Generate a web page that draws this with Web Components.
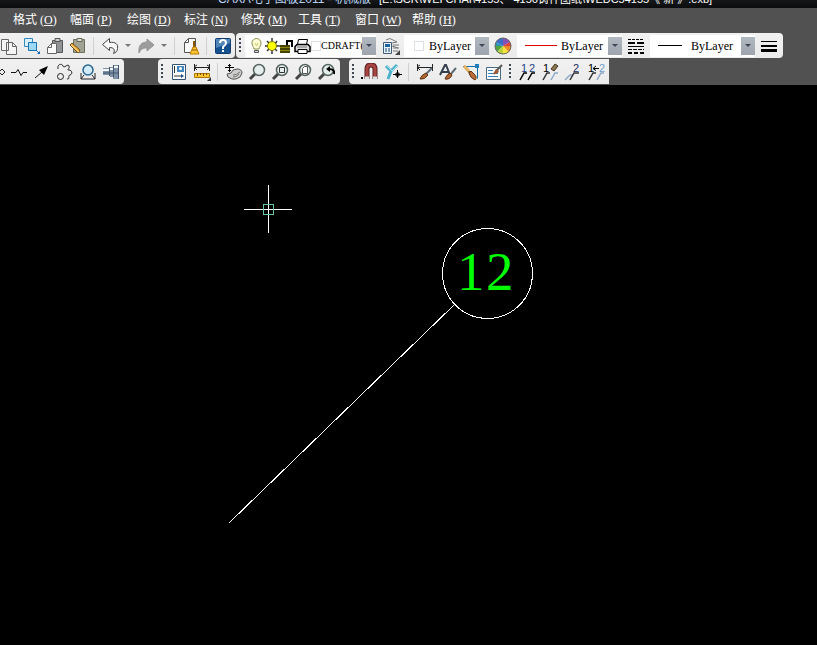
<!DOCTYPE html>
<html lang="zh-CN">
<head>
<meta charset="utf-8">
<title>CAXA电子图板2011</title>
<style>
html,body{height:100%}
body{margin:0;background:#000;overflow:hidden;font:12px/16px "Liberation Serif","Noto Sans CJK SC",serif}
</style>
</head>
<body>
<cad-app></cad-app>
<script>
const ICONS = {
copy:'<path d="M1.500 2.500h7v11h-7zM6.500 5.500h6l4 4v8h-10z" fill="#f5f5f5" stroke="#666"/><path d="M12.500 5.500v4h4" fill="none" stroke="#666"/>',
link:'<path d="M1.500 1.500h8v8h-8z" fill="#d9effb" stroke="#3388b8"/><path d="M5.500 5.500h8v8h-8z" fill="#9bd8fa" stroke="#1673b4"/><path d="M13 13l3 3" stroke="#1469b0"/><path d="M14 17h3v-3z" fill="#1469b0"/>',
paste:'<path d="M6.500 3.500h10v12h-10z" fill="#909497" stroke="#555"/><path d="M9 1.500h5v3H9z" fill="#ccc" stroke="#555"/><path d="M1.500 10.500l4-4h5v10h-9z" fill="#fafafa" stroke="#666"/><path d="M1.500 10.500h4v-4" fill="none" stroke="#666"/>',
format:'<path d="M4.500 2.500h11v13h-11z" fill="#a0a292" stroke="#69705e"/><path d="M8 1.500h5v3H8z" fill="#e2dfc3" stroke="#666"/><path d="M1 8l8 8 2-3-8-7z" fill="#edaa35" stroke="#775018"/><path d="M2 8l8 7" stroke="#ffe09a"/>',
undo:'<path d="M1.500 7.500l7-6v4c6-1 9 2 8 6 0 3-2 4-4 5 2-4 0-6-4-6v3z" fill="#f8f8f8" stroke="#444" stroke-linejoin="round"/>',
redo:'<path d="M17 8l-7-6v3C5 5 1 8 2 16c2-4 4-5 8-5v3z" fill="#9c9c9c" stroke="#989898"/>',
clean:'<path d="M2.500 5.500l4-4h7v14h-11z" fill="#fafafa" stroke="#555"/><path d="M2.500 5.500h4v-4" fill="none" stroke="#555"/><path d="M12 4v6" stroke="#8b5706" stroke-width="2"/><path d="M11 10h3l3 7H8z" fill="#ffc632" stroke="#ba7600"/><path d="M10 13h5" stroke="#8b5706"/>',
help:'<rect x="1.500" y="1.500" width="15" height="15" rx="1" fill="#15508f" stroke="#123c6d"/><path d="M2 2h14v4L2 11z" fill="#4e87b8"/><path d="M6 6q0-3 3-3t3 3q0 2-3 4v2M9 13v2" fill="none" stroke="#fff" stroke-width="2"/>',
bulb:'<path d="M4 12c0-2-2-3-2-6a4.500 4.500 0 019 0c0 3-2 4-2 6z" fill="#ffffd8" stroke="#8b8b46"/><path d="M4.500 13.500h4v2h-4z" fill="#ddd" stroke="#555"/><path d="M5 6l1.500 3L8 6" fill="none" stroke="#cdc86b"/>',
sun:'<path d="M8 1v3M8 14v3M1 9h3M12 9h4M3 4l3 3M11 12l2 2M13 4l-2 3M5 12l-2 2" stroke="#333" stroke-width="1.500"/><circle cx="8" cy="9" r="4.500" fill="#ff0" stroke="#777800"/>',
lock:'<path d="M0 8h10v8H0z" fill="#8b860f"/><path d="M0 9h10M0 12h10M0 15h10" stroke="#000" stroke-width="1"/><path d="M7 8V4h5v6" fill="none" stroke="#000" stroke-width="2"/>',
printer:'<path d="M4.500 2.500h9l-1 5h-9z" fill="#fff" stroke="#000"/><path d="M3 7.500h11l2 2v5H1v-5z" fill="#ddd" stroke="#000" stroke-width="1.500"/><path d="M4 12.500h9v4H4z" fill="#fff" stroke="#000"/><path d="M3 10h10" stroke="#777"/>',
layers:'<path d="M1.500 5.500h8v11h-8z" fill="#eaf4fc" stroke="#425b75"/><path d="M3 7h5v3H3z" fill="#1e63a4"/><path d="M3 12h2M6 12h2M3 14h2M6 14h2" stroke="#174777"/><path d="M4 3q4-3 7 0l4 2-5 1M11 8h6M11 11h6M11 14h5M10 9l6 2" fill="none" stroke="#777"/><path d="M18 13v5h-5z" fill="#444"/>',
wheel:'<path d="M9 9V1A8 8 0 0116 5z" fill="#8252b7"/><path d="M9 9L2 5a8 8 0 017-4z" fill="#386fc9"/><path d="M9 9H1a8 8 0 011-4z" fill="#2b95b7"/><path d="M9 9L3 15a8 8 0 01-2-6z" fill="#52a53e"/><path d="M9 9v8a8 8 0 01-6-2z" fill="#bad13b"/><path d="M9 9l6 6a8 8 0 01-6 2z" fill="#f8e43d"/><path d="M9 9h8a8 8 0 01-2 6z" fill="#ef8b27"/><path d="M9 9l7-4a8 8 0 011 4z" fill="#e33e36"/><circle cx="9" cy="9" r="8" fill="none" stroke="#666"/>',
types:'<path d="M1 2.500h16" stroke="#000" stroke-dasharray="3 1"/><path d="M1 6h16" stroke="#000" stroke-width="2" stroke-dasharray="7 2"/><path d="M1 9.500h16" stroke="#000" stroke-width="1"/><path d="M1 12.500h16" stroke="#000" stroke-dasharray="4 1"/><path d="M1 16h16" stroke="#000" stroke-width="2" stroke-dasharray="4 2"/>',
weights:'<path d="M1 4.500h16" stroke="#000"/><path d="M1 9h16" stroke="#000" stroke-width="2"/><path d="M1 13.500h16" stroke="#000" stroke-width="3"/>',
diamond:'<path d="M15 6l3 3-3 3-3-3z" fill="none" stroke="#222"/>',
zig:'<path d="M1 9.500h5l2-3 3 6 2-3h4" fill="none" stroke="#111"/>',
arrow:'<path d="M2 15L9 9" stroke="#111"/><path d="M15 3L6 7l5 5z" fill="#000"/>',
spline:'<circle cx="4.500" cy="13.500" r="3" fill="none" stroke="#222"/><path d="M2 6c-1-5 4-6 5-3s5-3 6 0-3 4 0 4 4 4 1 5 1 4-3 4" fill="none" stroke="#222"/>',
hole:'<circle cx="9" cy="7" r="5" fill="#d2eaf9" stroke="#29668e" stroke-width="1.500"/><path d="M2 10v6h14v-6M2 16l3-4M16 16l-3-4" fill="none" stroke="#222"/>',
shaft:'<path d="M1 5h7V4h3V2h6v14h-6v-2H8v-2H1z" fill="#7e91a7"/><path d="M1 7h6M8 6h3M12 4h4" fill="none" stroke="#f2f7fc" stroke-width="2"/><path d="M7.500 4v9M11.500 2v12M1 10h15M16.500 2v14" stroke="#41546d"/>',
block:'<path d="M2.500 1.500h13v15h-13z" fill="#fff" stroke="#345578"/><path d="M7 3h7v6H7z" fill="#4385be"/><path d="M4.500 3v7M4 13h8" stroke="#333"/><circle cx="10.500" cy="5.500" r="1.500" fill="#fff"/><path d="M11 11l3 2-3 2z" fill="#14508a"/>',
measure:'<path d="M1.500 1v7M16.500 1v7M1 4.500h16M4 2L1 4l3 3M14 2l3 2-3 3" stroke="#222" fill="none"/><path d="M1.500 10.500h15v4h-15z" fill="#ffc62b" stroke="#aa7605"/><path d="M4.500 10v3M7.500 10v2M10.500 10v3M13.500 10v2" stroke="#775000"/><path d="M18 14v4h-4z" fill="#333"/>',
hand:'<path d="M6 10q1-4 6-4 5 0 5 4-1 5-6 6-4 1-8-2l-1-3z" fill="#cdcdcb" stroke="#555" stroke-linejoin="round"/><path d="M8 12q4 0 7-3M8 14q4 0 6-3" stroke="#777" fill="none"/><path d="M4.500 1v8M0 4.500h9M3 2.500h3M3 7.500h3" stroke="#000"/>',
zoom:'<path d="M7 11l-5 5" stroke="#444" stroke-width="3"/><circle cx="11" cy="7" r="5.500" fill="#e3eeed" stroke="#566461" stroke-width="1.500"/>',
magnet:'<path d="M6 16V6q0-4 4-4t4 4v10" fill="none" stroke="#5c2020" stroke-width="5"/><path d="M6 16V6q0-4 4-4t4 4v10" fill="none" stroke="#a84441" stroke-width="3"/><path d="M4 15h4M12 15h4" stroke="#d9e2e7" stroke-width="3"/><path d="M0 14h2v2H0z" fill="#000"/>',
snap:'<path d="M2 3l5 5 6-6M7 8l-3 8" fill="none" stroke="#4fb2cd" stroke-width="3"/><path d="M3 3l5 5 5-5" fill="none" stroke="#a4e4ef"/><path d="M13.500 7v8M9 11.500h9" stroke="#000"/><path d="M12 10h3v3h-3z" fill="none" stroke="#000"/>',
dim:'<path d="M1.500 1v7M16.500 1v7M1 4.500h16M4 2L1 4l3 3" fill="none" stroke="#222"/><path d="M16 5l-7 7" stroke="#5e6c76" stroke-width="2"/><path d="M10 10l2 2q-3 5-8 4 1-4 6-6z" fill="#ae6534" stroke="#613312"/>',
textstyle:'<path d="M1 12L6 2h1l4 10M3 9h7" fill="none" stroke="#333f4c" stroke-width="2"/><path d="M17 5l-6 7" stroke="#5e6c76" stroke-width="2"/><path d="M11 10l2 2q-2 5-7 4 1-4 5-6z" fill="#ae6534" stroke="#613312"/>',
leader:'<path d="M1 3.500h14.500v12" fill="none" stroke="#126caa"/><path d="M13 1h4v4h-4z" fill="#237dbd"/><path d="M2 3l7 8" stroke="#74522a" stroke-width="2"/><path d="M9 8l2 2q5 4 2 7-5-2-6-7z" fill="#bb6d35" stroke="#613312"/><path d="M2 3l5 5" stroke="#eab35c" stroke-width="3"/>',
table:'<path d="M1.500 4.500h14v12h-14z" fill="#f7fcff" stroke="#4b6c88"/><path d="M3 7.500h5M3 10.500h10M3 13.500h10" stroke="#3a82b6"/><path d="M17 2l-6 6" stroke="#555" stroke-width="2"/><path d="M11 6l3 2q-2 4-6 3z" fill="#9e5c38"/>'
};
ICONS.zoomWin = ICONS.zoom + '<path d="M8.500 4.500h5v5h-5z" fill="none" stroke="#333"/>';
ICONS.zoomPage = ICONS.zoom + '<path d="M8.500 5.500l2-2h3v7h-5z" fill="#fff" stroke="#555"/>';
ICONS.zoomPrev = ICONS.zoom + '<path d="M17 11q1-5-5-5" fill="none" stroke="#000" stroke-width="2"/><path d="M9 6l4-3v6z" fill="#000"/>';
const legs = (a, b) => `<path d="M2 17l4-7h3" fill="none" stroke="${a}" stroke-width="1.500"/><path d="M10 17l4-7h3" fill="none" stroke="${b}" stroke-width="1.500"/>`;
const digit = (x, t, c) => `<text x="${x}" y="9" font-family="Liberation Sans,sans-serif" font-size="11" fill="${c}">${t}</text>`;
ICONS.num12 = legs('#000', '#000') + digit(3, '1', '#1d3f87') + digit(11, '2', '#1d3f87');
ICONS.numDel = legs('#333', '#8fa9ca') + digit(2, '1', '#000') + '<path d="M10 6l4-5 3 2-4 5z" fill="#8c7452" stroke="#443523"/>';
ICONS.num2 = '<path d="M1 17l5-5h3" fill="none" stroke="#8fa9ca" stroke-width="1.500"/><path d="M6 17l4-7h5" fill="none" stroke="#333" stroke-width="1.500"/>' + digit(9, '2', '#1c2d60');
ICONS.numAlign = legs('#333', '#8fa9ca') + digit(1, '1', '#000') + digit(12, '2', '#729ed0') + '<path d="M6 5.500h6M9 3L6 5.500l3 2" fill="none" stroke="#000"/>';

function define(name, css, html) {
  customElements.define(name, class extends HTMLElement {
    constructor() {
      super();
      this.attachShadow({ mode: 'open' }).innerHTML =
        `<style>*{box-sizing:border-box}${css}</style>${typeof html === 'function' ? html(this) : html}`;
    }
  });
}

define('cad-icon', ':host{display:block;width:18px;height:18px;flex:none}svg{display:block}',
  el => `<svg width="18" height="18" viewBox="0 0 18 18" aria-hidden="true">${ICONS[el.getAttribute('name')]}</svg>`);

define('tool-button', ':host{display:block;flex:none}button{display:grid;place-items:center;width:23px;height:24px;padding:0;border:0;background:none}',
  el => `<button type="button" aria-label="${el.getAttribute('label')}"><cad-icon name="${el.getAttribute('name')}"></cad-icon></button>`);

define('drop-button', ':host{display:block;flex:none}button{display:grid;place-items:center;width:13px;height:24px;padding:0;border:0;background:none}i{border:3px solid transparent;border-top-color:#777;border-bottom:0}',
  '<button type="button" aria-label="更多"><i></i></button>');

define('tool-separator', ':host{display:flex;justify-content:center;width:9px;flex:none}i{width:1px;height:18px;background:#d0d0d0}', '<i></i>');

define('tool-grip', ':host{display:block;width:2px;height:16px;flex:none;margin:0 4px 0 3px;background:repeating-linear-gradient(#3f4756 0 2px,transparent 2px 4px)}', '');

define('tool-bar', `:host{display:flex;align-items:center;height:25px;flex:none;background:linear-gradient(#f1f1f1,#ebebeb);border-radius:4px;padding-right:1px}`, '<slot></slot>');

define('combo-box', `
:host{display:grid;grid-template-columns:auto 1fr 14px;align-items:center;height:22px;background:#fff;flex:none}
.lead{grid-area:1/1;display:flex;align-items:center}
select{grid-area:1/2/2/4;min-width:0;width:100%;height:22px;appearance:none;border:0;padding:0 14px 0 0;margin:0;background:transparent;color:#000;font:inherit}
.arrow{grid-area:1/3;height:18px;background:linear-gradient(#b2b8c0,#9da4ad);display:grid;place-items:center;pointer-events:none}
i{border:3px solid transparent;border-top-color:#3b4858;border-bottom:0}`,
  el => `<span class="lead"><slot></slot></span><select aria-label="${el.getAttribute('label')}"><option>${el.getAttribute('value')}</option></select><span class="arrow"><i></i></span>`);

define('menu-item', ':host{display:block;width:57px;flex:none}button{width:100%;border:0;padding:0;background:none;color:#fff;font:inherit;text-align:left;white-space:nowrap}span{margin-left:3px}',
  el => `<button type="button">${el.getAttribute('text')}<span>(<u>${el.getAttribute('key')}</u>)</span></button>`);

define('title-bar', `:host{display:flex;align-items:flex-end;height:8px;padding-left:218px;overflow:hidden;background:linear-gradient(#151719,#0a0b0c);white-space:pre;font:12px/16px "Liberation Sans","Noto Sans CJK SC",sans-serif}
b{font-weight:400;color:#b9d3f5;width:161px;flex:none}span{color:#fff;font-size:11px}
b,span{margin-bottom:1px}`,
  '<b>CAXA电子图板2011 - 机械版</b><span>[E:\\SCR\\WEI CHAI\\4155、 4156铸件图纸\\WEDC54155《 新 》.exb]</span>');

define('drawing-canvas', ':host{display:block;flex:1;min-height:0;background:#000}svg{display:block;width:100%;height:100%}',
  `<svg role="img" aria-label="图纸">
  <g fill="none" stroke="#fff" shape-rendering="crispEdges">
    <circle cx="487.500" cy="188.500" r="45"/>
    <path d="M454.500 219.500L228.500 438.500M268.500 100v48M244 124.500h48"/>
    <path d="M263.500 119.500h10v10h-10z" stroke="#63c9a4"/>
  </g>
  <text x="457 486" y="205" font-family="Liberation Serif,serif" font-size="55" fill="#0f0">12</text></svg>`);

const tools = list => list.map(([name, label]) =>
  name === '|' ? '<tool-separator></tool-separator>' :
  name === 'v' ? '<drop-button></drop-button>' :
  name === ':' ? '<tool-grip></tool-grip>' :
  `<tool-button name="${name}" label="${label}"></tool-button>`).join('');

define('cad-app', `
:host{display:flex;flex-direction:column;height:100vh;background:#515151}
nav{display:flex;align-items:center;height:24px;padding-left:13px;padding-bottom:1px;box-sizing:border-box;height:25px}
.row{display:flex;height:26px;overflow:hidden}
.edit{margin-left:-3px}
.draw{margin-left:-16px;margin-right:34px;padding-right:2px}
.props{margin-left:1px;padding-right:3px}
.view{margin-right:9px;padding-right:3px}
.style{border-radius:4px 0 0 4px;padding-right:1px}
.number{border-radius:0;padding-right:2px}
.layer{width:131px;padding-left:5px;margin-right:3px;font-size:10px}
.layer cad-icon[name=bulb]{width:14px}
.layer cad-icon[name=sun]{width:16px}
.layer cad-icon[name=lock]{width:14px}
.layer cad-icon[name=printer]{width:17px}
.colour{width:85px;padding-left:10px;margin:0 2px}
.type,.weight{width:105px;padding-left:8px;margin:0 2px 0 3px}
.swatch{width:10px;height:10px;border:1px solid #dce0e5}
.colour .swatch{margin-right:5px}
.line{width:32px;height:1px;background:#e00000;margin-right:4px}
.weight .line{width:24px;background:#000;margin-right:9px}`, `
<title-bar></title-bar>
<nav>${[['格式','O'],['幅面','P'],['绘图','D'],['标注','N'],['修改','M'],['工具','T'],['窗口','W'],['帮助','H']].map(([t, k]) => `<menu-item text="${t}" key="${k}"></menu-item>`).join('')}</nav>
<div class="row">
  <tool-bar class="edit">${tools([['copy','复制'],['link','带基点复制'],['paste','粘贴'],['format','特性匹配'],['|'],['undo','撤销'],['v'],['redo','重做'],['v'],['|'],['clean','清理'],['|'],['help','帮助']])}</tool-bar>
  <tool-bar class="props">${tools([[':']])}
    <combo-box class="layer" label="图层" value="CDRAFT("><cad-icon name="bulb"></cad-icon><cad-icon name="sun"></cad-icon><cad-icon name="lock"></cad-icon><cad-icon name="printer"></cad-icon><div class="swatch"></div></combo-box>
    ${tools([['layers','图层设置']])}
    <combo-box class="colour" label="颜色" value="ByLayer"><div class="swatch"></div></combo-box>
    ${tools([['wheel','颜色设置']])}
    <combo-box class="type" label="线型" value="ByLayer"><div class="line"></div></combo-box>
    ${tools([['types','线型设置']])}
    <combo-box class="weight" label="线宽" value="ByLayer"><div class="line"></div></combo-box>
    ${tools([['weights','线宽设置']])}
  </tool-bar>
</div>
<div class="row">
  <tool-bar class="draw">${tools([['diamond','中心线'],['zig','双折线'],['arrow','箭头'],['spline','样条'],['hole','圆孔'],['shaft','轴']])}</tool-bar>
  <tool-bar class="view">${tools([[':'],['block','图块'],['measure','测量'],['|'],['hand','平移'],['zoom','缩放'],['zoomWin','窗口缩放'],['zoomPage','显示全部'],['zoomPrev','上一视图']])}</tool-bar>
  <tool-bar class="style">${tools([[':'],['magnet','捕捉'],['snap','三视图导航'],['|'],['dim','标注样式'],['textstyle','文本样式'],['leader','引线样式'],['table','样式管理']])}</tool-bar>
  <tool-bar class="number">${tools([[':'],['num12','生成序号'],['numDel','删除序号'],['num2','编辑序号'],['numAlign','交换序号']])}</tool-bar>
</div>
<drawing-canvas></drawing-canvas>`);
</script>
</body>
</html>
